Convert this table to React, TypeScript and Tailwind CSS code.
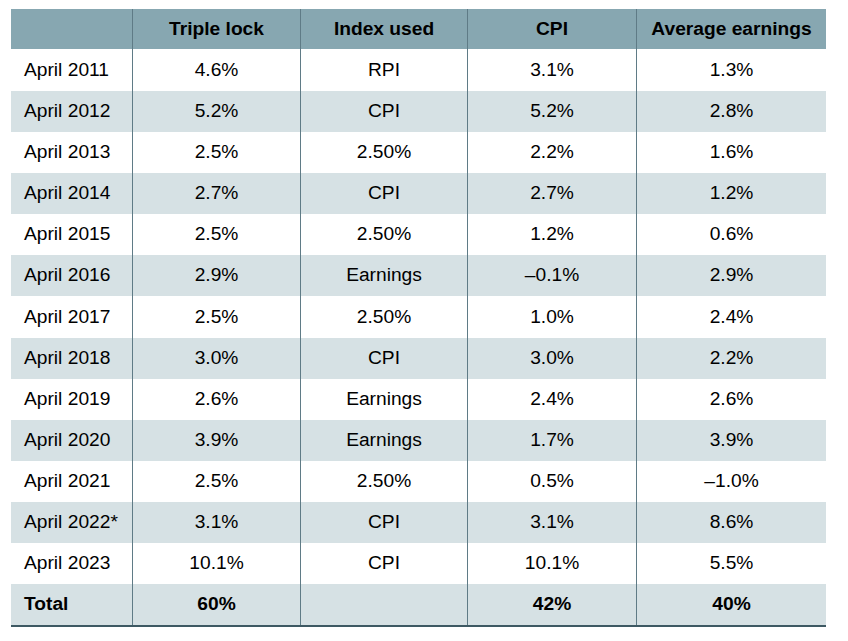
const rows = [
  ["April 2011", "4.6%", "RPI", "3.1%", "1.3%"],
  ["April 2012", "5.2%", "CPI", "5.2%", "2.8%"],
  ["April 2013", "2.5%", "2.50%", "2.2%", "1.6%"],
  ["April 2014", "2.7%", "CPI", "2.7%", "1.2%"],
  ["April 2015", "2.5%", "2.50%", "1.2%", "0.6%"],
  ["April 2016", "2.9%", "Earnings", "\u20130.1%", "2.9%"],
  ["April 2017", "2.5%", "2.50%", "1.0%", "2.4%"],
  ["April 2018", "3.0%", "CPI", "3.0%", "2.2%"],
  ["April 2019", "2.6%", "Earnings", "2.4%", "2.6%"],
  ["April 2020", "3.9%", "Earnings", "1.7%", "3.9%"],
  ["April 2021", "2.5%", "2.50%", "0.5%", "\u20131.0%"],
  ["April 2022*", "3.1%", "CPI", "3.1%", "8.6%"],
  ["April 2023", "10.1%", "CPI", "10.1%", "5.5%"],
];

const headers = ["", "Triple lock", "Index used", "CPI", "Average earnings"];
const total = ["Total", "60%", "", "42%", "40%"];

function Row({ cells, className, bold }: { cells: string[]; className: string; bold?: boolean }) {
  return (
    <div className={`grid grid-cols-[121px_168px_167px_169px_190px] ${className}`}>
      {cells.map((c, i) => (
        <div
          key={i}
          className={`flex items-center ${i === 0 ? "pl-[13px]" : "justify-center border-l border-[#5f7b86]"} ${bold ? "font-bold" : ""}`}
        >
          {c}
        </div>
      ))}
    </div>
  );
}

export default function App() {
  return (
    <div className="w-[848px] h-[641px] bg-white pt-[9px] pl-[11px] text-[19.2px] text-black font-['Liberation_Sans',Arial,sans-serif]">
      <div className="w-[815px] border-b-2 border-[#3e5963]">
        <Row cells={headers} className="h-[40px] bg-[#87a7b1]" bold />
        {rows.map((r, i) => (
          <Row
            key={i}
            cells={r}
            className={`${i === 0 || i === 6 ? "h-[42px]" : "h-[41px]"} ${i % 2 === 1 ? "bg-[#d6e1e4]" : "bg-white"}`}
          />
        ))}
        <Row cells={total} className="h-[41px] bg-[#d6e1e4]" bold />
      </div>
    </div>
  );
}
